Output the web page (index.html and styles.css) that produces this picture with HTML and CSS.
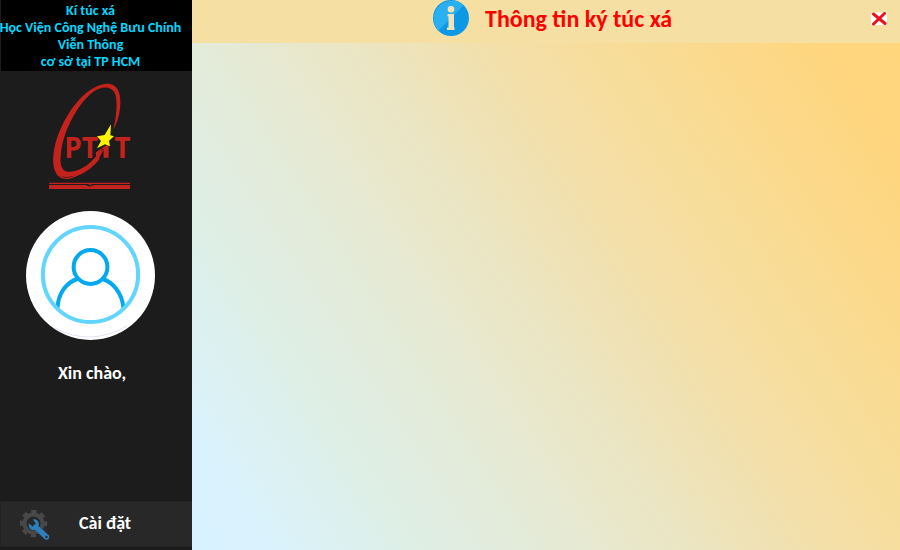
FILE: index.html
```html
<!DOCTYPE html>
<html lang="vi">
<head>
<meta charset="utf-8">
<title>Thông tin ký túc xá</title>
<link rel="stylesheet" href="styles.css">
</head>
<body>
<div class="app">
  <aside class="sidebar">
    <div class="brand">
      <span>Kí túc xá</span>
      <span>Học Viện Công Nghệ Bưu Chính</span>
      <span>Viễn Thông</span>
      <span>cơ sở tại TP HCM</span>
    </div>
    <svg class="logo" width="100" height="120" viewBox="0 0 300 360">
      <path fill="#c4221c" fill-rule="evenodd" d="M220 164C242 126 246 76 236 50C225 22 195 21 165 37C115 62 70 130 49 196C34 246 36 298 62 304C92 312 140 296 174 254L192 222L182 227C154 264 127 286 92 290C62 292 57 267 65 218C76 160 112 91 154 55C185 30 216 33 226 58C234 87 228 129 220 164Z"/>
      <path class="orbit" d="M50 296Q76 322 112 300Q150 286 178 250M127 71Q110 87 101 107"/>
      <text class="logo-text" y="248"><tspan x="73">P</tspan><tspan x="125">T</tspan><tspan x="223">T</tspan></text>
      <path d="M174 244L186 222H191V248H206V212L200 210L168 232V244Z" fill="#c4221c"/>
      <path d="M213 148L211 181L222 184L207 197L210 214L195 208L171 220L183 198L171 184L194 180Z" fill="#fff500"/>
      <path d="M27 323H270V327H27ZM27 330H137L149 335L162 330H270V342H27Z" fill="#c4221c"/>
      <path d="M145 326L150 331L156 326" fill="none" stroke="#c4221c" stroke-width="3"/>
    </svg>
    <svg class="avatar" width="130" height="130" viewBox="0 0 130 130">
      <circle cx="65.500" cy="65.500" r="64.500" fill="#fff"/>
      <path d="M30 118Q65 137 102 116" fill="none" stroke="#d0cdf0" stroke-width=".6"/>
      <path d="M32.500 98C33 83 42 72 52.500 69M77.500 69C88 72 97 83 98.500 98" fill="none" stroke="#03a9f0" stroke-width="4"/>
      <circle cx="65.500" cy="57" r="16.900" fill="none" stroke="#03a9f0" stroke-width="4"/>
      <circle cx="65.500" cy="64.500" r="47.600" fill="none" stroke="#62d5ff" stroke-width="4"/>
    </svg>
    <div class="hello"><span>Xin chào,</span></div>
    <div class="settings">
      <svg width="32" height="32" viewBox="0 0 32 32">
        <circle cx="13.500" cy="13.500" r="9" fill="none" stroke="#484848" stroke-width="4"/>
        <circle cx="13.500" cy="13.500" r="12" fill="none" stroke="#484848" stroke-width="3.400" stroke-dasharray="5.200 4.225" stroke-dashoffset="2.600"/>
        <path d="M13 9.500C17 8.500 20 12.500 18.500 16.200L28.500 25C31 28 27 31.500 24.500 29L15 19.800C11.500 21 7.500 17.500 9 13.500L12.500 16.500L15.800 13.500Z" fill="#2b7fbd"/>
        <circle cx="26.500" cy="27" r="1.200" fill="#282828"/>
      </svg>
      <span>Cài đặt</span>
    </div>
  </aside>
  <main class="main">
    <header class="header">
      <svg class="info" width="36" height="36" viewBox="0 0 36 36">
        <circle cx="18" cy="18" r="18" fill="#0b99e5"/>
        <path d="M5.300 30.700A18 18 0 0 1 30.700 5.300Z" fill="#29b0f2"/>
        <circle cx="18" cy="9.200" r="3.300" fill="#f5e3b6"/>
        <path d="M14.500 14H21V27.500H21.500V30H14V27.500H15.500V16.500H14.500Z" fill="#f5e3b6"/>
      </svg>
      <h1><span>Thông tin ký túc xá</span></h1>
      <svg class="close" width="18" height="14" viewBox="0 0 18 14">
        <path d="M1 .5H17V13H1Z" fill="#fff"/>
        <path d="M3.500 2L15 11.500M14.500 1.500L3.500 12" stroke="#ee101b" stroke-width="3" stroke-linecap="round"/>
      </svg>
    </header>
    <section class="content"></section>
  </main>
</div>
</body>
</html>
```

FILE: styles.css
```css
* { box-sizing: border-box; }
body { margin: 0; font-family: Carlito, Lato, "Open Sans", sans-serif; font-weight: 700; }
.app { display: flex; width: 900px; height: 550px; overflow: hidden; }
.sidebar { width: 192px; display: flex; flex-direction: column; background: #1c1c1c; color: #fff; }
.brand {
  height: 71px; padding-top: 2px; border-left: 1px solid #1c1c1c; background: #000; color: #00d9ff;
  display: flex; flex-direction: column; align-items: center; padding-right: 12px;
  font-size: 14px; line-height: 17px; white-space: nowrap;
}
.brand span, .hello span, .settings span, h1 span { display: inline-block; white-space: nowrap; }
.logo { margin: 4px 0 0 40px; flex: none; }
.orbit { fill: none; stroke: #c4221c; stroke-width: 4; }
.logo-text { font: 700 84px "Open Sans", sans-serif; fill: #c4221c; }
.avatar { margin: 15px 0 0 25px; flex: none; }
.hello { height: 24px; margin-top: 21px; padding-right: 8px; text-align: center; font-size: 18px; line-height: 24px; }
.settings {
  display: flex; align-items: center; height: 46px; margin-top: auto; margin-bottom: 3px;
  border: solid #222; border-width: 1px 0 1px 1px; background: #282828; padding-left: 19px; font-size: 18px;
}
.settings svg { margin-top: 3px; }
.settings span { margin: -2px 0 0 27px; }
.main { flex: 1; display: flex; flex-direction: column; }
.header { height: 43px; display: flex; background: #f5dfa2; color: #f00; }
.info { margin-left: 241px; }
h1 { margin: 0 0 0 16px; width: 187px; font-size: 24px; line-height: 38px; letter-spacing: 0; }
.close { margin: 12px 12px 0 auto; }
.content {
  flex: 1;
  background: linear-gradient(57deg, #d8f2ff 0%, #d9f2fd 7%, #deefe6 21%, #e4ebd9 33%, #ebe5c2 48%, #f4dfa8 62%, #f8dc96 74%, #ffd67f 92%, #ffd67c 100%);
}
```
